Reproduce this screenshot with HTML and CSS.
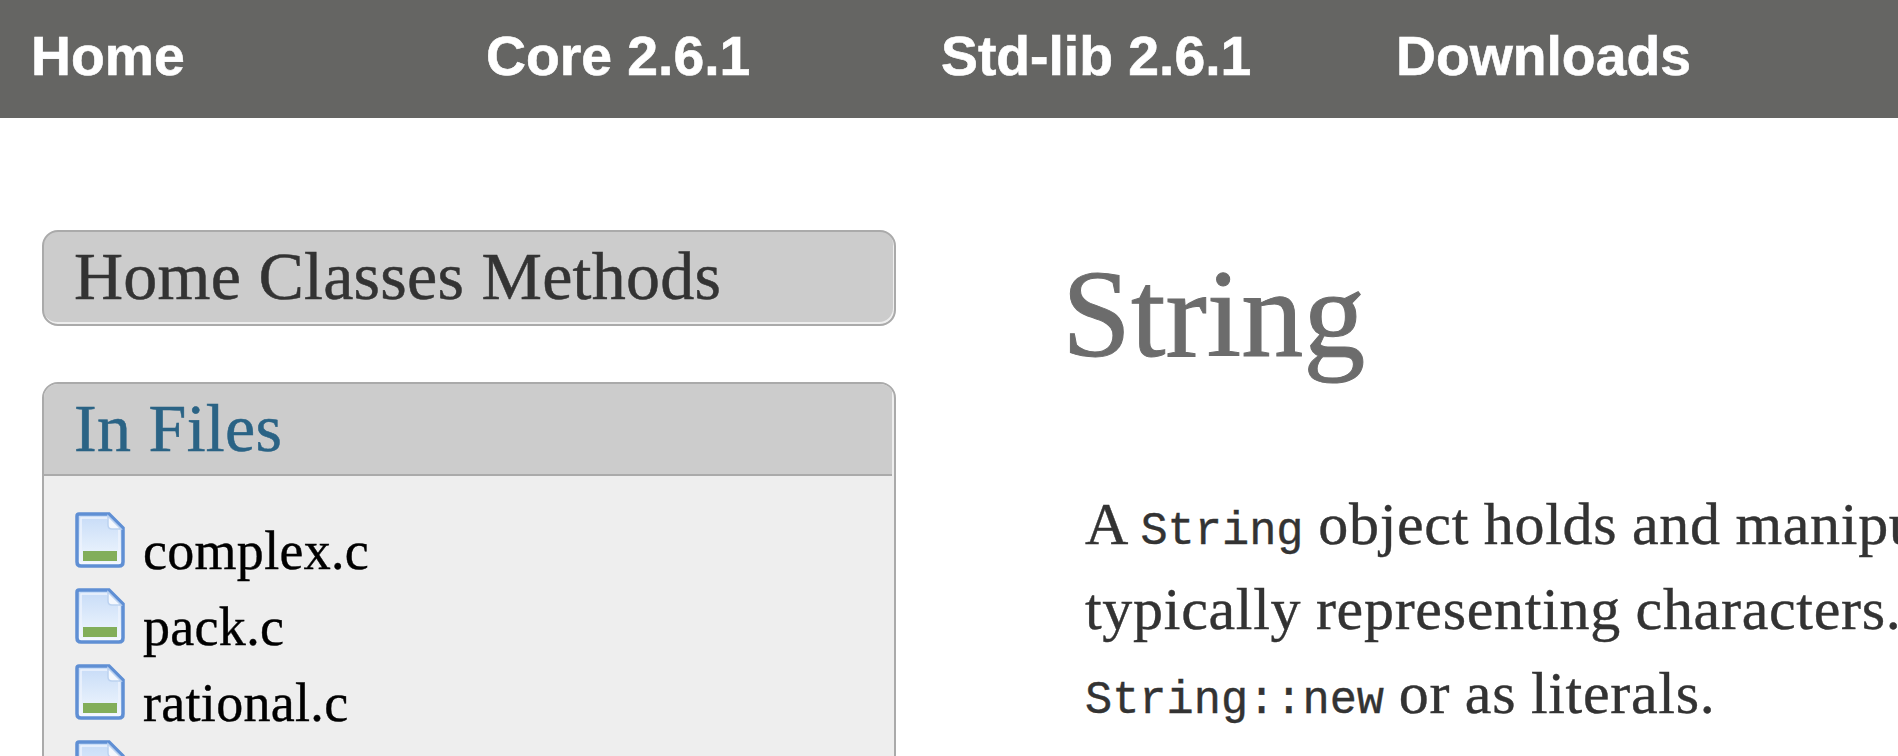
FILE: index.html
```html
<!DOCTYPE html>
<html lang="en">
<head>
    <meta charset="UTF-8">
    <meta name="viewport" content="width=device-width, initial-scale=1.0">
    <title>String</title>
    <link rel="stylesheet" href="styles.css">
</head>
<body>
    <header class="topbar">
        <a class="topbar-link" href="#">Home</a>
        <a class="topbar-link" href="#">Core 2.6.1</a>
        <a class="topbar-link" href="#">Std-lib 2.6.1</a>
        <a class="topbar-link" href="#">Downloads</a>
    </header>

    <div class="layout">
        <aside class="sidebar">
            <div class="box nav-box">Home Classes Methods</div>

            <div class="box files-box">
                <h3 class="box-title">In Files</h3>
                <ul class="file-list">
                    <li class="file-item">
                        <svg class="file-icon" viewBox="0 0 50 56"><use href="#page"></use></svg>
                        <span>complex.c</span>
                    </li>
                    <li class="file-item">
                        <svg class="file-icon" viewBox="0 0 50 56"><use href="#page"></use></svg>
                        <span>pack.c</span>
                    </li>
                    <li class="file-item">
                        <svg class="file-icon" viewBox="0 0 50 56"><use href="#page"></use></svg>
                        <span>rational.c</span>
                    </li>
                    <li class="file-item">
                        <svg class="file-icon" viewBox="0 0 50 56"><use href="#page"></use></svg>
                        <span>string.c</span>
                    </li>
                </ul>
            </div>
        </aside>

        <main class="content">
            <h1 class="page-title">String</h1>
            <p class="description">
                A <code>String</code> object holds and manipulates an arbitrary sequence of bytes,<br>
                typically representing characters. <code>String</code> objects may be created using<br>
                <code>String::new</code> or as literals.
            </p>
        </main>
    </div>

    <!-- file icon used by the list -->
    <svg class="icon-defs" width="0" height="0">
        <defs>
            <linearGradient id="page-fill" x1="0" y1="0" x2="0" y2="1">
                <stop offset="0" stop-color="#c6dbf7"/>
                <stop offset="0.7" stop-color="#e6f0fc"/>
                <stop offset="1" stop-color="#f6f9fe"/>
            </linearGradient>
            <g id="page">
                <path d="M4 2H34L48 16V50Q48 54 44 54H6Q2 54 2 50V4Q2 2 4 2Z" fill="url(#page-fill)" stroke="#5f8fd4" stroke-width="3.5"/>
                <path d="M6 6H32L44 18V49H6Z" fill="none" stroke="#eef4fd" stroke-width="1.5"/>
                <path d="M33 4V13Q33 17 37 17H46Z" fill="#f4f8fe" stroke="#bcd2f0" stroke-width="1.5"/>
                <rect x="8" y="39" width="34" height="10" fill="#82ae5a"/>
            </g>
        </defs>
    </svg>
</body>
</html>
```

FILE: styles.css
```css
body {
    margin: 0;
    overflow: hidden;
    height: 756px;
    background-color: #fff;
    font-family: "Liberation Serif", serif;
}

.topbar {
    display: flex;
    align-items: center;
    box-sizing: border-box;
    height: 118px;
    padding: 0 0 6px 31px;
    background-color: #656563;
}

.topbar-link {
    width: 455px;
    color: #fff;
    font-family: "Liberation Sans", Arial, sans-serif;
    font-size: 55.3px;
    font-weight: bold;
    text-decoration: none;
    -webkit-text-stroke: 0.6px #fff;
}

.layout {
    display: flex;
    align-items: flex-start;
    padding: 112px 0 0 42px;
}

.sidebar {
    flex: none;
    width: 854px;
}

.box {
    box-sizing: border-box;
    border: 2px solid #aaa;
    border-radius: 16px;
    background-color: #ccc;
}

.nav-box {
    height: 96px;
    padding-left: 30px;
    line-height: 88px;
    font-size: 68px;
    letter-spacing: 0.25px;
    color: #333;
    box-shadow: inset -1px -2px 0 #eee;
    -webkit-text-stroke: 0.5px #333;
}

.files-box {
    margin-top: 56px;
    height: 500px;
    background-color: #eee;
    overflow: hidden;
}

.box-title {
    box-sizing: border-box;
    height: 92px;
    margin: 0 2px 0 0;
    padding-left: 30px;
    border-bottom: 2px solid #aaa;
    background-color: #ccc;
    line-height: 88px;
    font-size: 68px;
    font-weight: normal;
    letter-spacing: 0.3px;
    color: #2a6385;
    -webkit-text-stroke: 0.5px #2a6385;
}

.file-list {
    margin: 0;
    padding: 36px 0 0 31px;
    list-style: none;
}

.file-item {
    display: flex;
    align-items: flex-start;
    height: 76px;
    font-size: 54px;
    line-height: 79px;
    letter-spacing: 0.3px;
    color: #000;
    -webkit-text-stroke: 0.4px #000;
}

.file-icon {
    width: 50px;
    height: 56px;
    margin-right: 18px;
    filter: blur(0.5px);
}

.content {
    padding-left: 166px;
}

.page-title {
    margin: 15px 0 0;
    font-size: 124px;
    font-weight: normal;
    line-height: 140px;
    color: #6c6c6c;
    -webkit-text-stroke: 1px #6c6c6c;
}

.description {
    margin: 97px 0 0 23px;
    white-space: nowrap;
    font-size: 60px;
    line-height: 84.5px;
    letter-spacing: 0.7px;
    word-spacing: -1px;
    color: #333;
    -webkit-text-stroke: 0.4px #333;
}

code {
    font-family: "Liberation Mono", monospace;
    font-size: 45.3px;
    line-height: 1;
    letter-spacing: 0;
    word-spacing: 0;
}

.icon-defs {
    position: absolute;
}
```
